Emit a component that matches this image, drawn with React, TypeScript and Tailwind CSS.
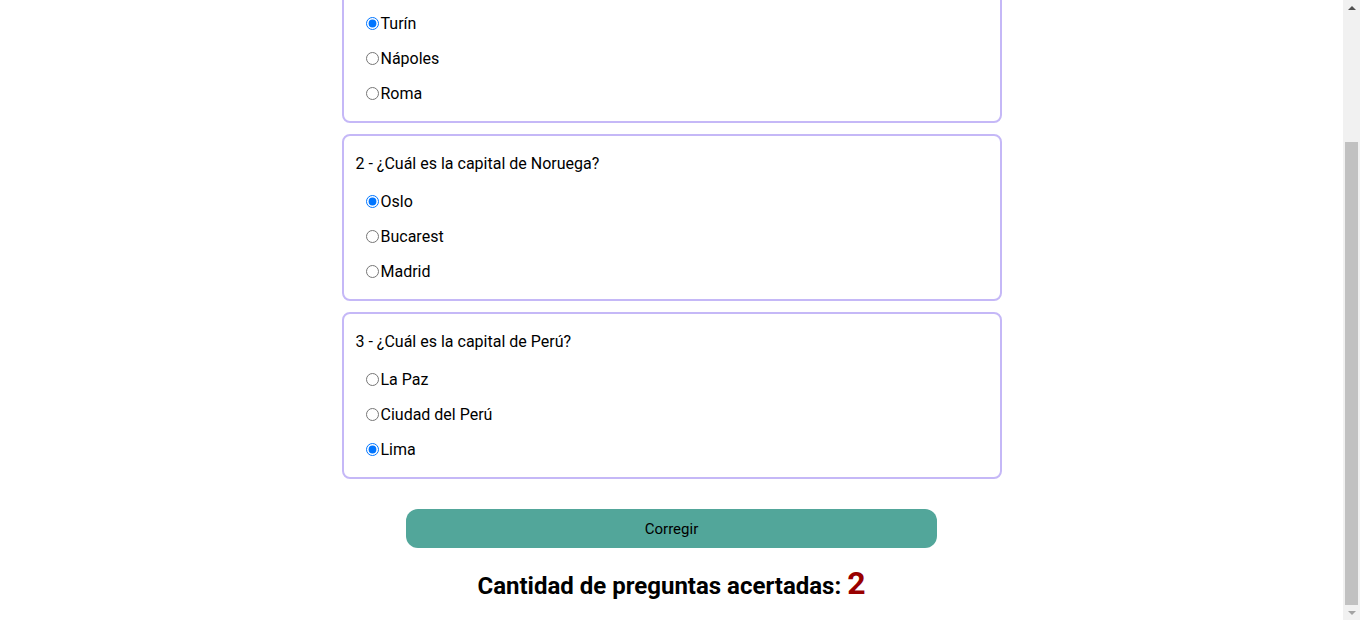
type Pregunta = {
  texto: string;
  opciones: string[];
  elegida: number;
};

const preguntas: Pregunta[] = [
  {
    texto: "1 - ¿Cuál es la capital de Italia?",
    opciones: ["Turín", "Nápoles", "Roma"],
    elegida: 0,
  },
  {
    texto: "2 - ¿Cuál es la capital de Noruega?",
    opciones: ["Oslo", "Bucarest", "Madrid"],
    elegida: 0,
  },
  {
    texto: "3 - ¿Cuál es la capital de Perú?",
    opciones: ["La Paz", "Ciudad del Perú", "Lima"],
    elegida: 2,
  },
];

const Tarjeta = ({ p, idx }: { p: Pregunta; idx: number }) => {
  return (
    <div className="rounded-lg border-2 border-[#c5b8f7] px-3 pb-[10px] pt-4">
      <p className="mb-2 h-6 text-base leading-6 text-black">{p.texto}</p>
      {p.opciones.map((op, i) => (
        <label
          key={op}
          className="ml-[10px] flex h-[35px] items-center gap-[2px] text-base text-black"
        >
          <input
            type="radio"
            name={`pregunta-${idx}`}
            defaultChecked={i === p.elegida}
            className="h-[13px] w-[13px]"
          />
          <span>{op}</span>
        </label>
      ))}
    </div>
  );
};

// barra de desplazamiento clásica (la página está bajada hasta el final)
const Scrollbar = () => (
  <div className="flex h-full w-[17px] shrink-0 flex-col bg-[#f1f1f1]">
    <div className="flex h-[15px] items-center justify-center">
      <div className="h-0 w-0 border-x-[4px] border-b-[4px] border-x-transparent border-b-[#505050]" />
    </div>
    <div className="flex flex-1 flex-col justify-end px-[2px]">
      <div className="h-[463px] bg-[#c1c1c1]" />
    </div>
    <div className="flex h-[15px] items-center justify-center">
      <div className="h-0 w-0 border-x-[4px] border-t-[4px] border-x-transparent border-t-[#a3a3a3]" />
    </div>
  </div>
);

export default function App() {
  return (
    <div className="flex h-[620px] w-full bg-white font-['Roboto',sans-serif]">
      <div className="flex flex-1 flex-col justify-end overflow-hidden">
        <div className="mx-auto flex w-[660px] flex-col">
          <h1 className="py-10 text-center text-3xl font-bold">
            Preguntas de capitales
          </h1>
          <div className="flex flex-col gap-[11px]">
            {preguntas.map((p, i) => (
              <Tarjeta key={i} p={p} idx={i} />
            ))}
          </div>
          <button
            type="button"
            className="mx-auto mt-[30px] block h-[39px] w-[531px] rounded-xl bg-[#52a69a] text-[15px] text-black"
          >
            Corregir
          </button>
          <h2 className="mb-[15px] mt-[14px] text-center text-2xl font-bold text-black">
            Cantidad de preguntas acertadas:{" "}
            <span className="text-[32px] text-[#990000]">2</span>
          </h2>
        </div>
      </div>
      <Scrollbar />
    </div>
  );
}
